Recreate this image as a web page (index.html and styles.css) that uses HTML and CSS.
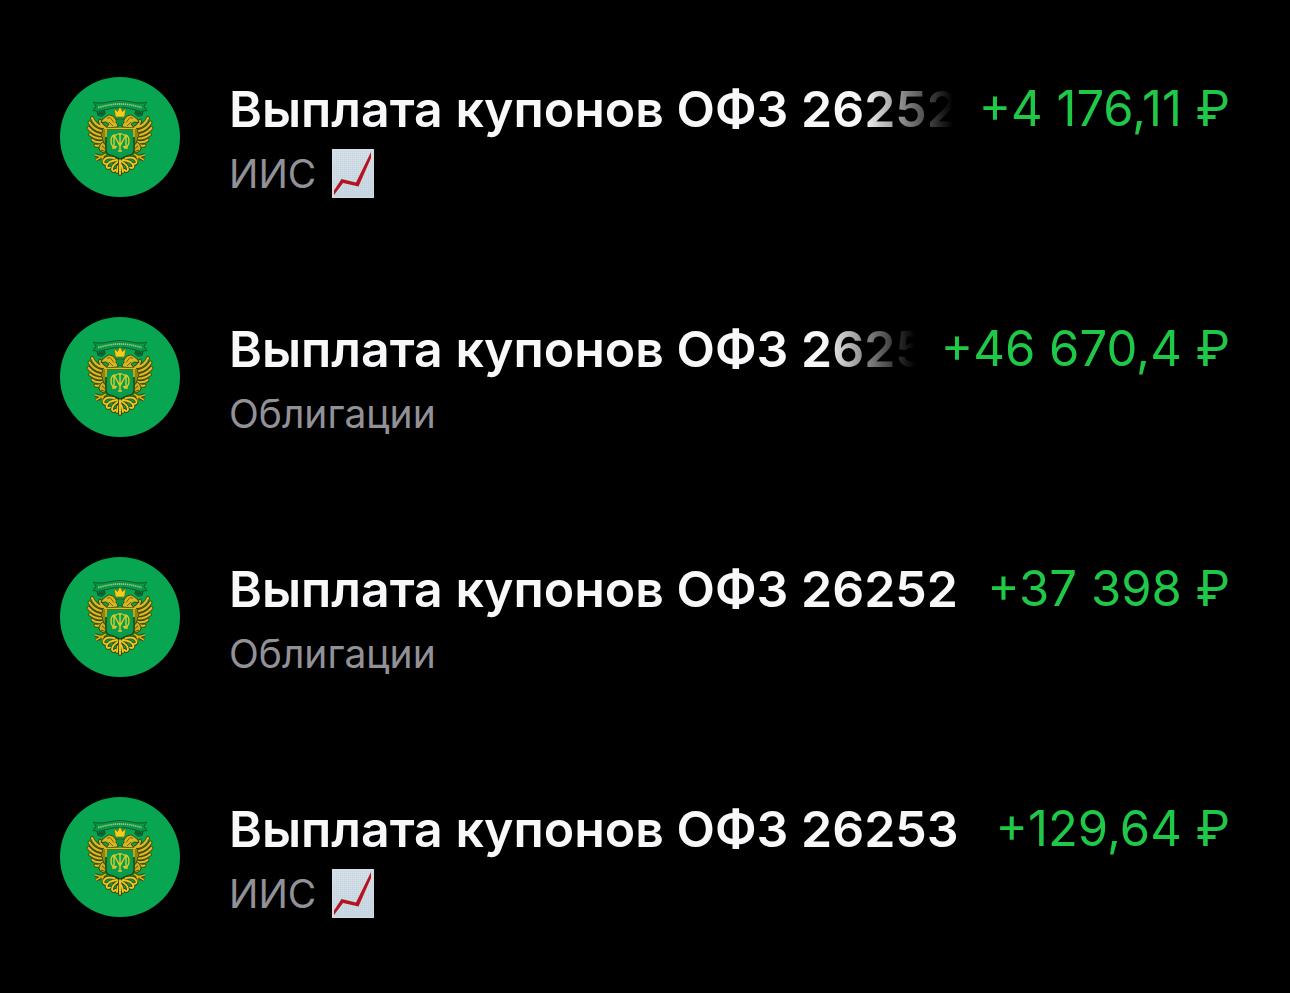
FILE: index.html
```
<!DOCTYPE html>
<html lang="ru">
<head>
<meta charset="utf-8">
<title>Операции</title>
<meta name="viewport" content="width=device-width, initial-scale=1">
<link rel="stylesheet" href="styles.css">
</head>
<body>
<svg class="sprite" aria-hidden="true">
  <defs>
    <path id="fronds" d="M55 81Q46 79 43.500 84Q43 87 46 87M57 83Q48 84 46.500 89Q47 92 50 90.500M59 84Q52 88 52 92.500Q53 95.500 55.500 93M60 80V97M60 86Q57 90 57 95" fill="none" stroke-linecap="round"/>
    <path id="feathers" d="M32 41Q35 48 42 50M29.500 45.500Q33 52 41 54M28.500 51Q33 56.500 40 58M30 57.500Q35 61.500 41 61.500M32.500 63Q36 66 42 65M35.500 68.500Q39 69.500 43 67M40 44Q41 49 46 51" fill="none" stroke-linecap="round"/>
    <g id="half">
      <!-- banner end -->
      <path d="M60 23.500C51 23.500 42 28 33.500 25L36 29.500 33 33.500 39 34.500C45 33 52 30.500 60 30.500" fill="#0a9549" stroke="#0b5a2b" stroke-width="1"/>
      <path d="M37 34.500l1 4 4 1 3-3-1-3M39 36l4 1" fill="#0a6a36" stroke="#0b4f26" stroke-width="1"/>
      <!-- wing -->
      <path d="M48 50L40 46 34 50 38 62 42 67 46 64Z" fill="#94830f"/>
      <use href="#feathers" stroke="#3a4d10" stroke-width="4"/>
      <use href="#feathers" stroke="#e2b61c" stroke-width="2.200"/>
      <!-- head and neck -->
      <path d="M42 43L46 39.500Q49 36.500 53 39L57 44 58 50 46 51 49 47 46 45 41 45.500Z" fill="#dfb51c" stroke="#33480f" stroke-width="1"/>
      <path d="M47 41.500l3-1 4 5M49 45l4 4" fill="none" stroke="#4a560f" stroke-width=".8"/>
      <!-- leg and claw -->
      <path d="M43 65Q37 69 40 74L44 76 48 75Q48 69 43 65Z" fill="#d3aa18" stroke="#33480f" stroke-width="1"/>
      <path d="M46 77L36 83M35 78L43 80 42 84" fill="none" stroke="#33480f" stroke-width="3.400"/>
      <path d="M46 77L36 83M35 78L43 80 42 84" fill="none" stroke="#d8af19" stroke-width="1.700"/>
      <path d="M42 69l5 4M41 73l6 2" fill="none" stroke="#42530f" stroke-width=".9"/>
      <!-- tail -->
      <use href="#fronds" stroke="#33480f" stroke-width="3.600"/>
      <use href="#fronds" stroke="#f0c51f" stroke-width="1.900"/>
    </g>
    <symbol id="emblem" viewBox="0 0 120 120">
      <circle cx="60" cy="60" r="60" fill="#08a650"/>
      <use href="#half"/>
      <use href="#half" transform="translate(120 0) scale(-1 1)"/>
      <path d="M38 30.500Q51 27 60 27T82 30.500" fill="none" stroke="#8ccb78" stroke-width="1.800" stroke-dasharray="1.400 .7"/>
      <path d="M55.500 40L54 31.500 57.500 34.500 60 29.500 62.500 34.500 66 31.500 64.500 40Z" fill="#f6cb19" stroke="#59620e" stroke-width=".6"/>
      <path d="M56 42h8v4l-4 3-4-3Z" fill="#07964a" stroke="#33510f" stroke-width=".7"/>
      <path d="M46 52H74V74Q74 78 67 79L60 82 53 79Q46 78 46 74Z" fill="#079d4c" stroke="#174f1c" stroke-width="1.600"/>
      <path d="M44 51.500H76M46 52V60M74 52V60" fill="none" stroke="#e4bb1b" stroke-width="1.600"/>
      <g fill="none" stroke="#dcc92a" stroke-width="1.400">
        <path d="M57 58Q51 57 51 64T57 69.500M63 58Q69 57 69 64T63 69.500M54 71V58L60 69 66 58V71M60 57V74M57.500 57H62.500M52 71H56M64 71H68M58 74H62"/>
      </g>
    </symbol>
    <linearGradient id="paper" x1="0" y1="0" x2="0" y2="1">
      <stop offset="0" stop-color="#dce4ea"/>
      <stop offset="1" stop-color="#ccdae4"/>
    </linearGradient>
    <pattern id="grid" width="2" height="2" patternUnits="userSpaceOnUse">
      <path d="M0 0H2M0 0V2" stroke="#b4c8d6" stroke-width=".6" fill="none"/>
    </pattern>
    <symbol id="chart" viewBox="0 0 42 49">
      <path d="M0 0H42V49H0Z" fill="url(#paper)"/>
      <path d="M0 0H42V49H0Z" fill="url(#grid)"/>
      <path d="M.5 .5H41.500V48.500H.5Z" fill="none" stroke="#d5dce2"/>
      <path d="M2 46V41.500L9.500 30 24 33.500 39 3V9L26.500 37.500 11 34Z" fill="#b51222"/>
    </symbol>
  </defs>
</svg>
<main>
  <ul class="operations">
    <li class="operation">
      <svg class="avatar" role="img" aria-label="Минфин"><use href="#emblem"/></svg>
      <div class="body">
        <div class="line">
          <span class="title title-faded">Выплата купонов ОФЗ 26252</span>
          <span class="amount">+4 176,11 ₽</span>
        </div>
        <div class="account">ИИС <svg class="chart" aria-hidden="true"><use href="#chart"/></svg></div>
      </div>
    </li>
    <li class="operation">
      <svg class="avatar" role="img" aria-label="Минфин"><use href="#emblem"/></svg>
      <div class="body">
        <div class="line">
          <span class="title title-faded">Выплата купонов ОФЗ 26252</span>
          <span class="amount">+46 670,4 ₽</span>
        </div>
        <div class="account">Облигации</div>
      </div>
    </li>
    <li class="operation">
      <svg class="avatar" role="img" aria-label="Минфин"><use href="#emblem"/></svg>
      <div class="body">
        <div class="line">
          <span class="title">Выплата купонов ОФЗ 26252</span>
          <span class="amount">+37 398 ₽</span>
        </div>
        <div class="account">Облигации</div>
      </div>
    </li>
    <li class="operation">
      <svg class="avatar" role="img" aria-label="Минфин"><use href="#emblem"/></svg>
      <div class="body">
        <div class="line">
          <span class="title">Выплата купонов ОФЗ 26253</span>
          <span class="amount">+129,64 ₽</span>
        </div>
        <div class="account">ИИС <svg class="chart" aria-hidden="true"><use href="#chart"/></svg></div>
      </div>
    </li>
  </ul>
</main>
</body>
</html>
```
FILE: styles.css
```
body {
  margin: 0;
  background: #000;
  color: #f8f8fa;
  font-family: Inter, "Liberation Sans", sans-serif;
}

.sprite {
  position: absolute;
  width: 0;
  height: 0;
}

.operations {
  display: flex;
  flex-direction: column;
  gap: 118px;
  margin: 0;
  padding: 77px 60px 74px;
  list-style: none;
}

.operation {
  display: flex;
  align-items: flex-start;
  gap: 49px;
}

.avatar {
  flex: none;
  width: 120px;
  height: 120px;
}

.body {
  flex: 1;
  min-width: 0;
}

.line {
  display: flex;
  align-items: center;
  gap: 26px;
  font-size: 50px;
  line-height: 62px;
  white-space: nowrap;
}

.title {
  flex: 1;
  min-width: 0;
  overflow: hidden;
  font-weight: 600;
}

.title-faded {
  -webkit-mask-image: linear-gradient(to left, transparent, #000 90px);
  mask-image: linear-gradient(to left, transparent, #000 90px);
}

.amount {
  color: #20c848;
  font-size: 49px;
  line-height: 64px;
}

.account {
  display: flex;
  align-items: center;
  gap: 16px;
  padding-top: 6px;
  height: 52px;
  color: #929198;
  font-size: 39px;
}

.chart {
  width: 42px;
  height: 49px;
}
```
